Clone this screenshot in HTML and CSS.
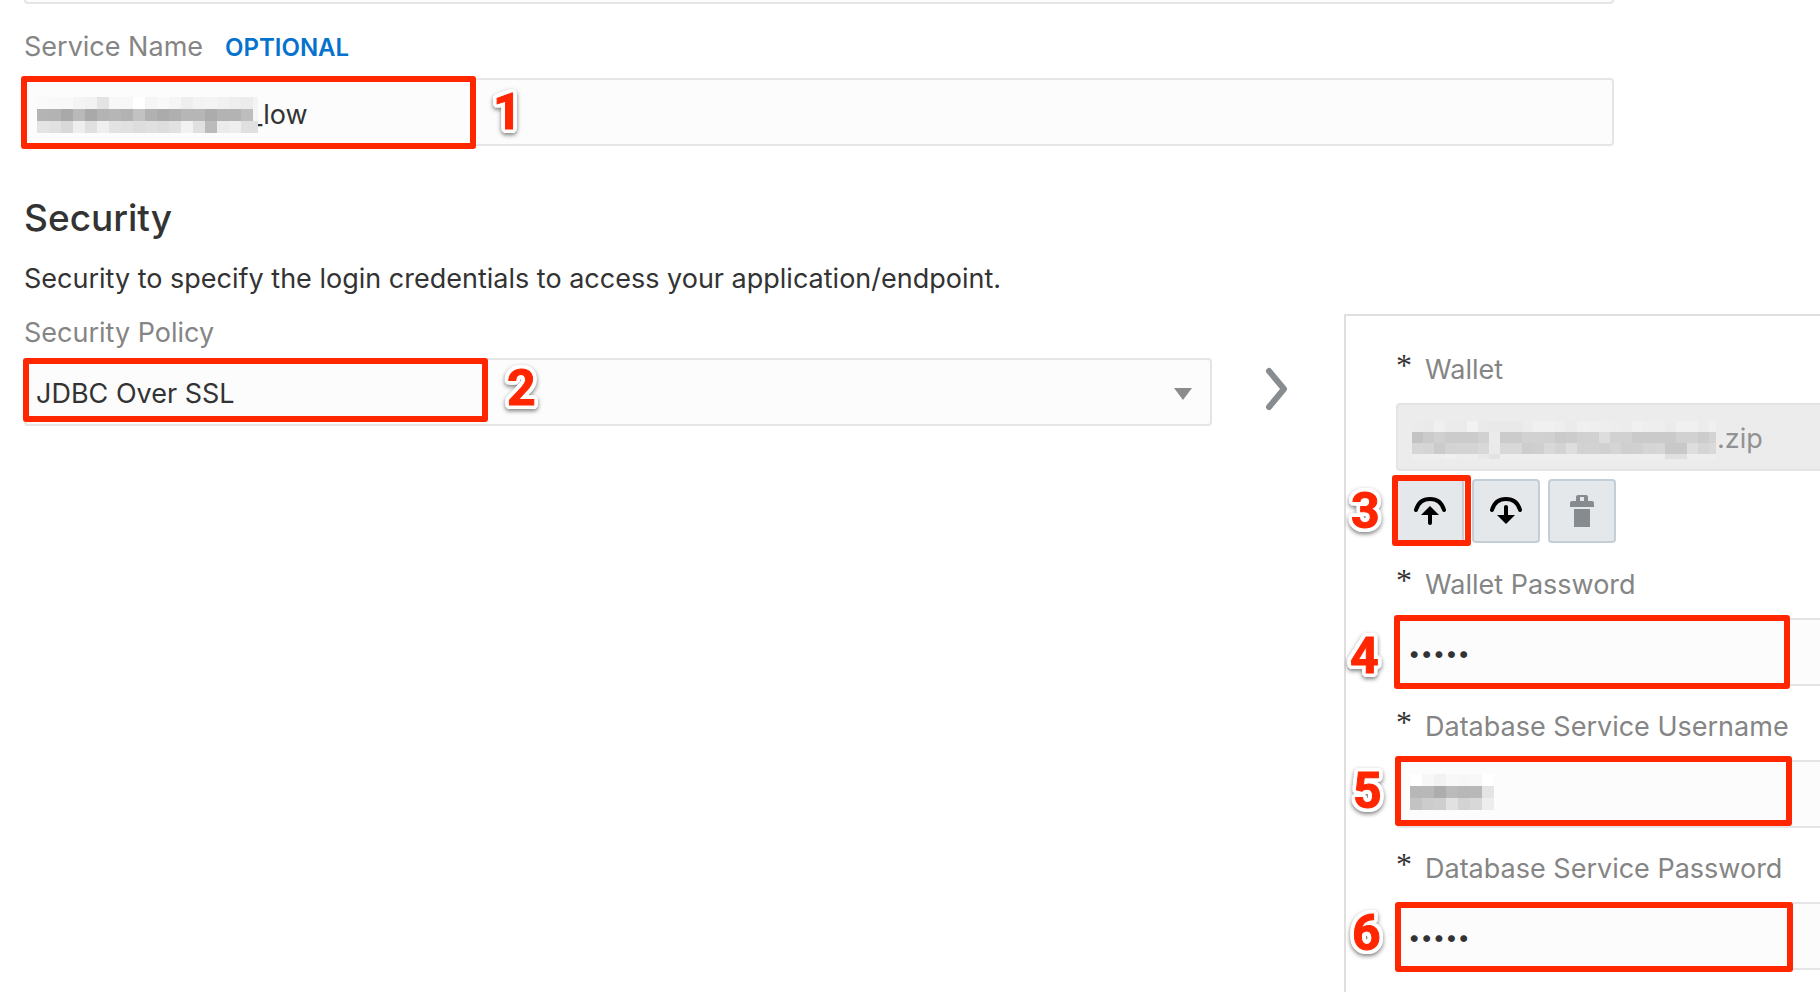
FILE: index.html
```html
<!DOCTYPE html>
<html lang="en">
<head>
<meta charset="utf-8">
<title>Connection Properties</title>
<link rel="stylesheet" href="styles.css">
</head>
<body>
<form class="page">
  <div class="previous-field"></div>

  <section class="service">
    <div class="label-row">
      <label class="label" for="service">Service Name</label>
      <span class="optional">OPTIONAL</span>
    </div>
    <div class="control">
      <input class="input input-service" id="service" type="text" value="_low">
      <svg class="mosaic mosaic-service" width="221" height="40" data-cell="12" data-rows="0,12,24" data-colors="faf9f9f4f2e3f7f7fff5f9f5eef3f4f1eeecf3 b4b3a9b9a9b3b6b2c2b1abafb6b6acb3b3bdf5 e4e1d9eee0efe3e1dde0dde2f2e0bbebeee0e0"></svg>
      <span class="mark mark-1"></span><span class="num num-1">1</span>
    </div>
  </section>

  <h1 class="heading">Security</h1>
  <p class="intro">Security to specify the login credentials to access your application/endpoint.</p>

  <div class="security">
    <div class="policy">
      <label class="label" for="policy">Security Policy</label>
      <div class="control">
        <select class="input" id="policy"><option>JDBC Over SSL</option></select>
        <svg class="caret" width="18" height="12" viewBox="0 0 18 12"><path d="M0 0h18L9 12z" fill="#8a8c8e"/></svg>
        <span class="mark mark-2"></span><span class="num num-2">2</span>
      </div>
    </div>
    <svg class="chevron" width="24" height="44" viewBox="0 0 24 44"><path d="M4 4L19 22L4 40" fill="none" stroke="#878c90" stroke-width="6" stroke-linecap="round" stroke-linejoin="round"/></svg>

    <div class="panel">
      <div class="field">
        <label class="label required" for="wallet"><span class="star">*</span>Wallet</label>
        <div class="control">
          <input class="input input-file" id="wallet" type="text" value=".zip" readonly>
          <svg class="mosaic mosaic-wallet" width="304" height="38" data-cell="11" data-rows="0,11,22,33" data-colors="ebeaf0ebebf2eae9e9e9ecf0f0eeebf0efeeedecf0eeeeebf0f0ecf0 c3cbd0cbcbcbd1ebcbcbd1d1d0caccd1d1ddd1d1cacacacad1d1ccd3 d6d5cbd3d4d4d8ead8d8cdcfd8d3ded2d2d0d5cfd0d5d6c8c8ded5d9 eeeeeef0edeee8e2eeeeeeeeeeeeeeeeeeeeeeeeeeeeeee0e0eeeeee"></svg>
        </div>
        <div class="tools">
          <button class="tool" type="button" aria-label="Upload">
            <svg width="36" height="32" viewBox="0 0 36 32"><path d="M4 15C6 8 11 4 18 4s12 4 14 11" fill="none" stroke="#000" stroke-width="4" stroke-linecap="round"/><path d="M18 11l9 9H9z"/><path d="M18 17v11" stroke="#000" stroke-width="4" stroke-linecap="round"/></svg>
          </button>
          <button class="tool" type="button" aria-label="Download">
            <svg width="36" height="32" viewBox="0 0 36 32"><path d="M4 15C6 8 11 4 18 4s12 4 14 11" fill="none" stroke="#000" stroke-width="4" stroke-linecap="round"/><path d="M18 29l9-9H9z"/><path d="M18 12v10" stroke="#000" stroke-width="4" stroke-linecap="round"/></svg>
          </button>
          <button class="tool" type="button" aria-label="Delete">
            <svg width="24" height="32" viewBox="0 0 24 32"><path d="M6 6V2Q6 0 8 0h8q2 0 2 2v4h4q2 0 2 2v4H0V8q0-2 2-2zM10 2v4h4V2zM4 14h16v18H4z" fill="#868b8f" fill-rule="evenodd"/></svg>
          </button>
          <span class="mark mark-3"></span><span class="num num-3">3</span>
        </div>
      </div>

      <div class="field">
        <label class="label required" for="walletpw"><span class="star">*</span>Wallet Password</label>
        <div class="control">
          <input class="input input-secret" id="walletpw" type="password" value="12345">
          <span class="mark mark-4"></span><span class="num num-4">4</span>
        </div>
      </div>

      <div class="field">
        <label class="label required" for="dbuser"><span class="star">*</span>Database Service Username</label>
        <div class="control">
          <input class="input" id="dbuser" type="text">
          <svg class="mosaic mosaic-user" width="84" height="36" data-cell="12" data-rows="0,12,24" data-colors="fff7f2f8f7f8ff b7b8adbab7b8e4 c3cccee1d3d8ed"></svg>
          <span class="mark mark-5"></span><span class="num num-5">5</span>
        </div>
      </div>

      <div class="field">
        <label class="label required" for="dbpw"><span class="star">*</span>Database Service Password</label>
        <div class="control">
          <input class="input input-secret" id="dbpw" type="password" value="12345">
          <span class="mark mark-6"></span><span class="num num-6">6</span>
        </div>
      </div>
    </div>
  </div>
</form>
<script src="mosaic.js"></script>
</body>
</html>
```
FILE: styles.css
```css
* { box-sizing: border-box; }

body {
  margin: 0;
  background: #fff;
  color: #333;
  font-family: Inter, "Liberation Sans", sans-serif;
  font-size: 27px;
  line-height: 32px;
  overflow: hidden;
}

.page { padding-left: 24px; }

.previous-field {
  height: 4px;
  margin-right: 206px;
  border: 2px solid #e5e5e5;
  border-top: 0;
  border-radius: 0 0 4px 4px;
  background: #fcfcfc;
}

.service { margin: 27px 206px 0 0; }
.label-row { display: flex; align-items: baseline; gap: 22px; margin-bottom: 14px; }
.label { display: block; color: #858585; }
.optional { color: #0572ce; font-size: 24px; font-weight: 600; }

.control { position: relative; }

.input {
  display: block;
  width: 100%;
  height: 68px;
  margin: 0;
  padding: 4px 10px 0;
  border: 2px solid #e5e5e5;
  border-radius: 4px;
  background: #fcfcfc;
  color: #333;
  font: inherit;
  appearance: none;
  outline: 0;
}
.input-service { padding-left: 224px; }
.input-secret { padding-top: 2px; font-size: 22px; }
.input-file {
  padding-top: 2px;
  padding-left: 319px;
  background: #ececec;
  border-color: #e4e4e4;
  color: #929292;
}

.heading { margin: 48px 0 21px; font-size: 37px; line-height: 48px; font-weight: 500; }
.intro { margin: 0 0 19px; }

.security { display: grid; grid-template-columns: minmax(0, 1fr) 132px 476px; }
.policy { padding-top: 3px; }
.policy .label { margin-bottom: 9px; }
.caret { position: absolute; top: 30px; right: 20px; }
.chevron { margin: 53px 0 0 53px; }

.panel {
  display: flex;
  flex-direction: column;
  gap: 25px;
  padding: 38px 0 30px 50px;
  border: solid #dfdfdf;
  border-width: 2px 0 0 2px;
}
.field .input { border-right: 0; border-radius: 4px 0 0 4px; }
.required { display: flex; margin-bottom: 17px; }
.star { width: 29px; color: #333; font: 32px/22px "Liberation Serif", serif; }

.tools { position: relative; display: flex; gap: 8px; margin: 8px 0 1px; }
.tool {
  display: flex;
  align-items: center;
  justify-content: center;
  width: 68px;
  height: 64px;
  padding: 0;
  border: 2px solid #c4ced7;
  border-radius: 4px;
  background: #e4e8ea;
}

.mosaic { position: absolute; }
.mosaic-service { left: 13px; top: 19px; }
.mosaic-wallet { left: 16px; top: 18px; }
.mosaic-user { left: 14px; top: 14px; }

/* Numbered callouts laid over the form */
.mark {
  position: absolute;
  border: 6px solid #ff2600;
  border-radius: 3px;
  pointer-events: none;
}
.mark-1 { left: -3px; top: -2px; width: 455px; height: 73px; }
.mark-2 { left: -1px; top: 0; width: 465px; height: 64px; }
.mark-3 { left: -4px; top: -4px; width: 79px; height: 71px; }
.mark-4 { left: -2px; top: -3px; width: 396px; height: 74px; }
.mark-5 { left: -1px; top: -4px; width: 397px; height: 70px; }
.mark-6 { left: -1px; top: 0; width: 398px; height: 70px; }

.num {
  position: absolute;
  color: #ff2600;
  font: bold 50px/50px Roboto, "Liberation Sans", sans-serif;
  text-shadow:
    4px 0 #fff, -4px 0 #fff, 0 4px #fff, 0 -4px #fff,
    3px 3px #fff, -3px 3px #fff, 3px -3px #fff, -3px -3px #fff,
    4px 2px #fff, -4px 2px #fff, 4px -2px #fff, -4px -2px #fff,
    2px 4px #fff, -2px 4px #fff, 2px -4px #fff, -2px -4px #fff;
  -webkit-text-stroke: 1px #ff2600;
  filter: drop-shadow(0 2px 2px rgba(0, 0, 0, .5));
}
.num-1 { left: 469px; top: 9px; }
.num-2 { left: 483px; top: 5px; }
.num-3 { left: -45px; top: 7px; }
.num-4 { left: -46px; top: 13px; }
.num-5 { left: -43px; top: 6px; }
.num-6 { left: -44px; top: 6px; }
```
FILE: mosaic.js
```js
// Fills each redaction mosaic with grey cells, two hex digits per cell.
document.querySelectorAll('.mosaic').forEach(function (svg) {
  var cell = Number(svg.dataset.cell);
  var tops = svg.dataset.rows.split(',').map(Number);
  svg.dataset.colors.split(' ').forEach(function (row, r) {
    row.match(/../g).forEach(function (v, c) {
      var rect = document.createElementNS('http://www.w3.org/2000/svg', 'rect');
      rect.setAttribute('x', c * cell);
      rect.setAttribute('y', tops[r]);
      rect.setAttribute('width', cell);
      rect.setAttribute('height', cell);
      rect.setAttribute('fill', '#' + v + v + v);
      svg.appendChild(rect);
    });
  });
});
```
